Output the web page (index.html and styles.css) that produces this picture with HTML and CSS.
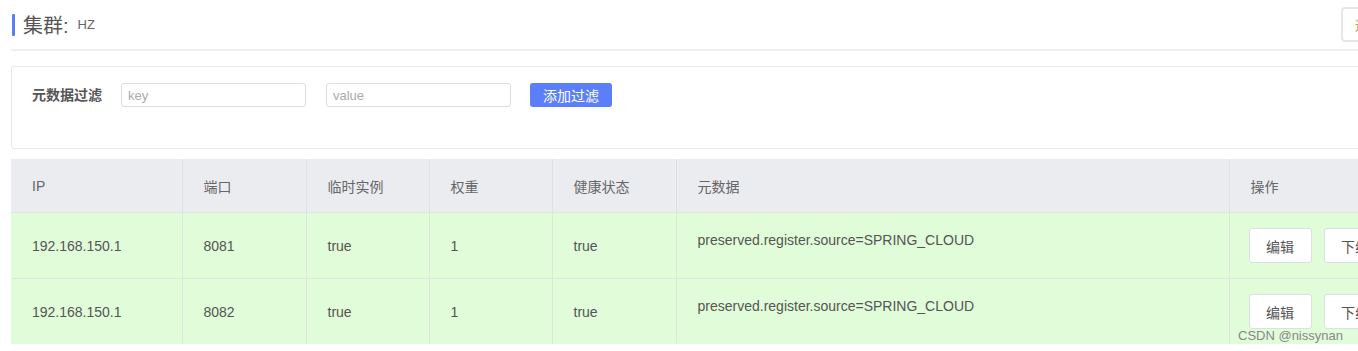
FILE: index.html
```html
<!DOCTYPE html>
<html lang="zh-CN">
<head>
  <meta charset="UTF-8" />
  <title>集群 HZ</title>
  <link rel="stylesheet" href="styles.css">
</head>
<body>
  <div class="page">
    <div class="title-bar">
      <h2 class="title"><span class="mark"></span>集群:<span class="cluster">HZ</span></h2>
      <button class="back-btn">返回</button>
    </div>

    <div class="filter-card">
      <label class="filter-label">元数据过滤</label>
      <input class="filter-input" type="text" placeholder="key">
      <input class="filter-input" type="text" placeholder="value">
      <button class="add-btn">添加过滤</button>
    </div>

    <table class="instances">
      <colgroup>
        <col style="width:171px">
        <col style="width:124px">
        <col style="width:123px">
        <col style="width:123px">
        <col style="width:124px">
        <col style="width:553px">
        <col style="width:190px">
      </colgroup>
      <thead>
        <tr>
          <th>IP</th>
          <th>端口</th>
          <th>临时实例</th>
          <th>权重</th>
          <th>健康状态</th>
          <th>元数据</th>
          <th>操作</th>
        </tr>
      </thead>
      <tbody>
        <tr>
          <td>192.168.150.1</td>
          <td>8081</td>
          <td>true</td>
          <td>1</td>
          <td>true</td>
          <td class="meta">preserved.register.source=SPRING_CLOUD</td>
          <td class="ops"><button class="op-btn">编辑</button><button class="op-btn">下线</button></td>
        </tr>
        <tr>
          <td>192.168.150.1</td>
          <td>8082</td>
          <td>true</td>
          <td>1</td>
          <td>true</td>
          <td class="meta">preserved.register.source=SPRING_CLOUD</td>
          <td class="ops"><button class="op-btn">编辑</button><button class="op-btn">下线</button></td>
        </tr>
      </tbody>
    </table>
  </div>
  <div class="watermark">CSDN @nissynan</div>
</body>
</html>
```

FILE: styles.css
```css
body {
  margin: 0;
  font-family: "Liberation Sans", "Noto Sans CJK SC", sans-serif;
  color: #555;
  background: #fff;
  overflow: hidden;
}

.page {
  width: 1420px;
  padding-left: 11px;
}

.title-bar {
  display: flex;
  justify-content: space-between;
  align-items: center;
  height: 49px;
  border-bottom: 2px solid #eef0f3;
}

.title {
  display: flex;
  align-items: center;
  margin: 0;
  font-size: 20px;
  font-weight: normal;
  color: #555;
}

.mark {
  display: inline-block;
  width: 3px;
  height: 22px;
  margin: 0 8px 0 1px;
  background: #5a7cf6;
  border-radius: 1px;
}

.cluster {
  font-size: 13px;
  margin-left: 9px;
  color: #666;
}

.back-btn {
  height: 35px;
  width: 70px;
  margin-right: 20px;
  background: #fff;
  border: 2px solid #e4e6ee;
  border-radius: 4px;
  color: #c9a060;
  font-size: 13px;
  padding: 0 0 0 12px;
  text-align: left;
  font-family: inherit;
}

.filter-card {
  display: flex;
  align-items: flex-start;
  height: 65px;
  margin-top: 15px;
  padding: 16px 0 0 20px;
  border: 1px solid #e6e7ec;
  border-radius: 3px;
}

.filter-label {
  font-size: 14px;
  font-weight: bold;
  color: #555;
  line-height: 24px;
  margin-right: 19px;
}

.filter-input {
  width: 185px;
  height: 24px;
  box-sizing: border-box;
  border: 1px solid #dcdde3;
  border-radius: 3px;
  padding: 0 6px;
  margin-right: 20px;
  font-family: inherit;
  font-size: 13px;
}

.filter-input::placeholder {
  color: #aaa;
}

.add-btn {
  height: 24px;
  width: 82px;
  margin-left: -1px;
  border: none;
  border-radius: 3px;
  background: #5b7ffa;
  color: #fff;
  font-size: 14px;
  font-family: inherit;
}

.instances {
  margin-top: 10px;
  border-collapse: collapse;
  table-layout: fixed;
  width: 1238px;
  font-size: 14px;
}

.instances th {
  height: 53px;
  background: #ebecf0;
  font-weight: normal;
  text-align: left;
  color: #666;
  padding: 0 0 0 21px;
  border-left: 1px solid #e0e1e5;
}

.instances td {
  height: 65px;
  background: #e1fcd8;
  padding: 0 0 0 21px;
  border-left: 1px solid #dfe6dc;
  border-top: 1px solid #dfe6dc;
  color: #555;
}

.instances th:first-child,
.instances td:first-child {
  border-left: none;
}

.instances td.meta {
  vertical-align: top;
  padding-top: 19px;
  box-sizing: border-box;
}

.instances td.ops {
  white-space: nowrap;
  padding-left: 19px;
}

.op-btn {
  width: 63px;
  height: 35px;
  margin-right: 12px;
  background: #fff;
  border: 1px solid #dcdfe6;
  border-radius: 3px;
  color: #555;
  font-size: 14px;
  font-family: inherit;
}

.watermark {
  position: absolute;
  left: 1238px;
  top: 328px;
  font-family: "Liberation Sans", sans-serif;
  font-size: 13px;
  color: #888;
}
```
